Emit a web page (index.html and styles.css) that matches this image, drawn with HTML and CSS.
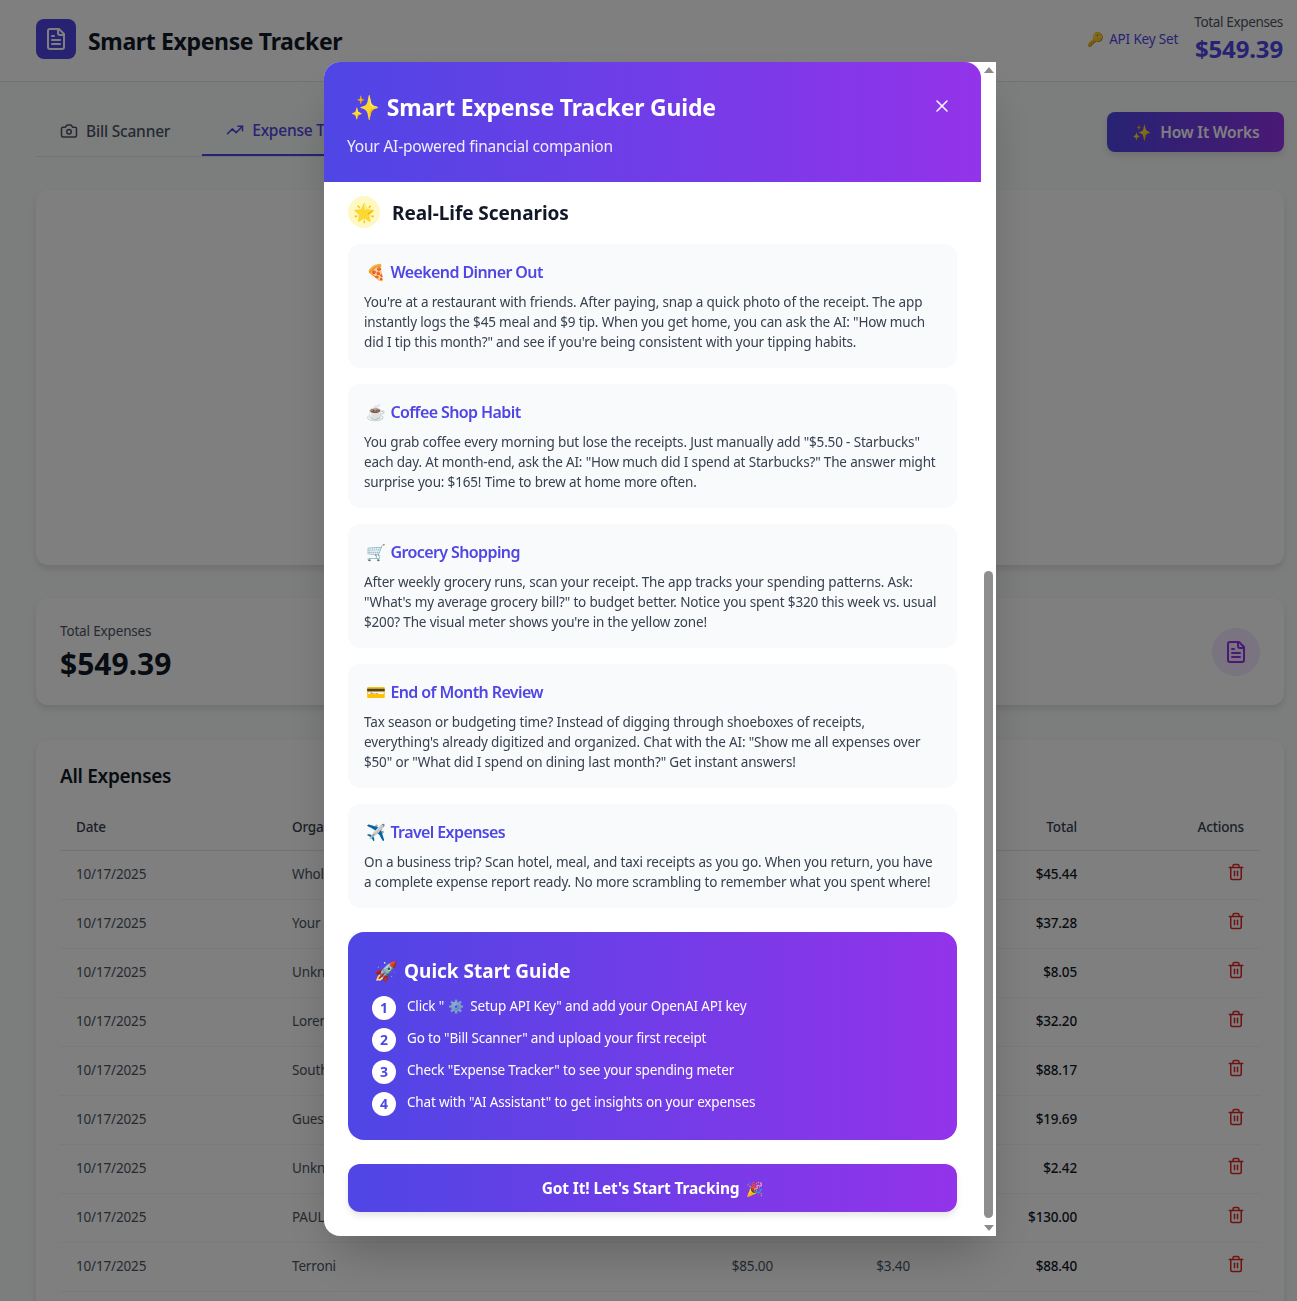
FILE: index.html
```html
<!DOCTYPE html>
<html lang="en">
<head>
    <meta charset="UTF-8">
    <meta name="viewport" content="width=device-width, initial-scale=1.0">
    <title>Smart Expense Tracker</title>
    <link rel="stylesheet" href="styles.css">
</head>
<body>
    <svg class="icon-defs" width="0" height="0" aria-hidden="true">
        <symbol id="i-file" viewBox="0 0 24 24"><path d="M15 2H6a2 2 0 0 0-2 2v16a2 2 0 0 0 2 2h12a2 2 0 0 0 2-2V7Z"/><path d="M14 2v4a2 2 0 0 0 2 2h4"/><path d="M10 9H8"/><path d="M16 13H8"/><path d="M16 17H8"/></symbol>
        <symbol id="i-trash" viewBox="0 0 24 24"><path d="M3 6h18"/><path d="M19 6v14c0 1-1 2-2 2H7c-1 0-2-1-2-2V6"/><path d="M8 6V4c0-1 1-2 2-2h4c1 0 2 1 2 2v2"/><path d="M10 11v6"/><path d="M14 11v6"/></symbol>
    </svg>

    <header class="topbar">
        <div class="brand">
            <span class="brand-mark"><svg class="icon icon-24"><use href="#i-file"/></svg></span>
            <h1>Smart Expense Tracker</h1>
        </div>
        <div class="topbar-right">
            <span class="key-status"><span class="emoji">🔑</span> API Key Set</span>
            <div class="topbar-total">
                <span>Total Expenses</span>
                <strong>$549.39</strong>
            </div>
        </div>
    </header>

    <main class="page">
        <div class="nav-row">
            <nav class="tabs">
                <a class="tab">
                    <svg class="icon icon-18" viewBox="0 0 24 24"><path d="M14.5 4h-5L7 7H4a2 2 0 0 0-2 2v9a2 2 0 0 0 2 2h16a2 2 0 0 0 2-2V9a2 2 0 0 0-2-2h-3l-2.5-3z"/><circle cx="12" cy="13" r="3"/></svg>
                    Bill Scanner
                </a>
                <a class="tab tab-active">
                    <svg class="icon icon-18" viewBox="0 0 24 24"><path d="M22 7 13.5 15.5 8.5 10.5 2 17"/><path d="M16 7h6v6"/></svg>
                    Expense Tracker
                </a>
            </nav>
            <button class="how-btn"><span class="emoji">✨</span> How It Works</button>
        </div>

        <section class="card meter-card"></section>

        <section class="card total-card">
            <div>
                <p class="total-label">Total Expenses</p>
                <p class="total-value">$549.39</p>
            </div>
            <span class="total-icon"><svg class="icon icon-24"><use href="#i-file"/></svg></span>
        </section>

        <section class="card expenses-card">
            <h2>All Expenses</h2>
            <table class="expenses">
                <colgroup>
                    <col class="col-date"><col class="col-org"><col class="col-sub"><col class="col-tax"><col class="col-total"><col class="col-actions">
                </colgroup>
                <thead>
                    <tr><th>Date</th><th>Organization</th><th class="num">Subtotal</th><th class="num">Tax</th><th class="num">Total</th><th class="num">Actions</th></tr>
                </thead>
                <tbody>
                    <tr><td>10/17/2025</td><td>Whole Foods</td><td class="num"></td><td class="num"></td><td class="num total">$45.44</td><td class="num"><svg class="icon icon-18 trash"><use href="#i-trash"/></svg></td></tr>
                    <tr><td>10/17/2025</td><td>Your Store</td><td class="num"></td><td class="num"></td><td class="num total">$37.28</td><td class="num"><svg class="icon icon-18 trash"><use href="#i-trash"/></svg></td></tr>
                    <tr><td>10/17/2025</td><td>Unknown</td><td class="num"></td><td class="num"></td><td class="num total">$8.05</td><td class="num"><svg class="icon icon-18 trash"><use href="#i-trash"/></svg></td></tr>
                    <tr><td>10/17/2025</td><td>Lorem Ipsum</td><td class="num"></td><td class="num"></td><td class="num total">$32.20</td><td class="num"><svg class="icon icon-18 trash"><use href="#i-trash"/></svg></td></tr>
                    <tr><td>10/17/2025</td><td>South Side</td><td class="num"></td><td class="num"></td><td class="num total">$88.17</td><td class="num"><svg class="icon icon-18 trash"><use href="#i-trash"/></svg></td></tr>
                    <tr><td>10/17/2025</td><td>Guest Check</td><td class="num"></td><td class="num"></td><td class="num total">$19.69</td><td class="num"><svg class="icon icon-18 trash"><use href="#i-trash"/></svg></td></tr>
                    <tr><td>10/17/2025</td><td>Unknown</td><td class="num"></td><td class="num"></td><td class="num total">$2.42</td><td class="num"><svg class="icon icon-18 trash"><use href="#i-trash"/></svg></td></tr>
                    <tr><td>10/17/2025</td><td>PAUL</td><td class="num"></td><td class="num"></td><td class="num total">$130.00</td><td class="num"><svg class="icon icon-18 trash"><use href="#i-trash"/></svg></td></tr>
                    <tr><td>10/17/2025</td><td>Terroni</td><td class="num">$85.00</td><td class="num">$3.40</td><td class="num total">$88.40</td><td class="num"><svg class="icon icon-18 trash"><use href="#i-trash"/></svg></td></tr>
                </tbody>
            </table>
        </section>
    </main>

    <div class="overlay">
        <div class="modal">
            <div class="guide">
                <div class="guide-head">
                    <div class="guide-title-row">
                        <h2><span class="emoji">✨</span>Smart Expense Tracker Guide</h2>
                        <svg class="icon guide-close" viewBox="0 0 24 24"><path d="M18 6 6 18"/><path d="m6 6 12 12"/></svg>
                    </div>
                    <p>Your AI-powered financial companion</p>
                </div>
                <div class="guide-body">
                    <div class="section-head">
                        <span class="section-badge emoji">🌟</span>
                        <h3>Real-Life Scenarios</h3>
                    </div>
                    <article class="scenario">
                        <h4><span class="emoji">🍕</span>Weekend Dinner Out</h4>
                        <p>You're at a restaurant with friends. After paying, snap a quick photo of the receipt. The app instantly logs the $45 meal and $9 tip. When you get home, you can ask the AI: "How much did I tip this month?" and see if you're being consistent with your tipping habits.</p>
                    </article>
                    <article class="scenario">
                        <h4><span class="emoji">☕</span>Coffee Shop Habit</h4>
                        <p>You grab coffee every morning but lose the receipts. Just manually add "$5.50 - Starbucks" each day. At month-end, ask the AI: "How much did I spend at Starbucks?" The answer might surprise you: $165! Time to brew at home more often.</p>
                    </article>
                    <article class="scenario">
                        <h4><span class="emoji">🛒</span>Grocery Shopping</h4>
                        <p>After weekly grocery runs, scan your receipt. The app tracks your spending patterns. Ask: "What's my average grocery bill?" to budget better. Notice you spent $320 this week vs. usual $200? The visual meter shows you're in the yellow zone!</p>
                    </article>
                    <article class="scenario">
                        <h4><span class="emoji">💳</span>End of Month Review</h4>
                        <p>Tax season or budgeting time? Instead of digging through shoeboxes of receipts, everything's already digitized and organized. Chat with the AI: "Show me all expenses over $50" or "What did I spend on dining last month?" Get instant answers!</p>
                    </article>
                    <article class="scenario">
                        <h4><span class="emoji">✈️</span>Travel Expenses</h4>
                        <p>On a business trip? Scan hotel, meal, and taxi receipts as you go. When you return, you have a complete expense report ready. No more scrambling to remember what you spent where!</p>
                    </article>

                    <div class="quick-start">
                        <h3><span class="emoji">🚀</span>Quick Start Guide</h3>
                        <ol class="steps">
                            <li><span class="step-num">1</span><span>Click "<span class="emoji gear">⚙️</span> Setup API Key" and add your OpenAI API key</span></li>
                            <li><span class="step-num">2</span><span>Go to "Bill Scanner" and upload your first receipt</span></li>
                            <li><span class="step-num">3</span><span>Check "Expense Tracker" to see your spending meter</span></li>
                            <li><span class="step-num">4</span><span>Chat with "AI Assistant" to get insights on your expenses</span></li>
                        </ol>
                    </div>

                    <button class="got-it">Got It! Let's Start Tracking <span class="emoji">🎉</span></button>
                </div>
            </div>
            <div class="scrollbar">
                <span class="arrow arrow-up"></span>
                <div class="track"><span class="thumb"></span></div>
                <span class="arrow arrow-down"></span>
            </div>
        </div>
    </div>
</body>
</html>
```

FILE: styles.css
```css
* {
    box-sizing: border-box;
}

body {
    margin: 0;
    height: 100vh;
    overflow: hidden;
    background-color: #f9fafb;
    color: #111827;
    font-family: "Noto Sans", sans-serif;
    font-size: 13.5px;
    letter-spacing: -0.16px;
}

h1, h2, h3, h4, p {
    margin: 0;
}

.icon-defs {
    position: absolute;
}

.icon {
    fill: none;
    stroke: currentColor;
    stroke-width: 2;
    stroke-linecap: round;
    stroke-linejoin: round;
    flex-shrink: 0;
}

.icon-24 {
    width: 24px;
    height: 24px;
}

.icon-18 {
    width: 18px;
    height: 18px;
}

/* top bar */
.topbar {
    height: 82px;
    padding: 0 14px 3px 36px;
    display: flex;
    align-items: center;
    justify-content: space-between;
    background: #fff;
    border-bottom: 1px solid #e5e7eb;
}

.brand {
    display: flex;
    align-items: center;
    gap: 12px;
}

.brand-mark {
    width: 40px;
    height: 40px;
    border-radius: 8px;
    background: #4f46e5;
    color: #fff;
    display: flex;
    align-items: center;
    justify-content: center;
}

.brand h1 {
    font-size: 23px;
    font-weight: 700;
    letter-spacing: -0.35px;
    margin-top: 3px;
}

.topbar-right {
    display: flex;
    align-items: center;
    gap: 16px;
}

.key-status {
    color: #4f46e5;
}

.key-status .emoji {
    margin-right: 2px;
}

.topbar-total {
    display: flex;
    flex-direction: column;
    align-items: flex-end;
    color: #4b5563;
    letter-spacing: -0.35px;
}

.topbar-total strong {
    color: #4f46e5;
    font-size: 24px;
    line-height: 32px;
    letter-spacing: -0.15px;
    margin-top: 2px;
}

/* tabs */
.page {
    padding: 30px 13px 0 36px;
}

.nav-row {
    display: flex;
    justify-content: space-between;
    align-items: flex-start;
    height: 78px;
}

.tabs {
    display: flex;
    gap: 8px;
    width: 600px;
    height: 45px;
    border-bottom: 1px solid #e5e7eb;
}

.tab {
    display: flex;
    align-items: center;
    gap: 8px;
    height: 44px;
    padding: 0 24px 7px;
    color: #4b5563;
    font-size: 15.5px;
    font-weight: 500;
    letter-spacing: -0.2px;
}

.tab-active {
    color: #4f46e5;
    border-bottom: 2px solid #4f46e5;
}

.how-btn {
    height: 40px;
    width: 177px;
    border: none;
    border-radius: 8px;
    background: linear-gradient(90deg, #4f46e5, #9333ea);
    box-shadow: 0 4px 6px rgba(0, 0, 0, 0.1);
    color: #fff;
    font-family: inherit;
    font-size: 15.5px;
    font-weight: 600;
    letter-spacing: -0.2px;
}

.how-btn .emoji {
    margin-right: 6px;
}

/* cards */
.card {
    background: #fff;
    border-radius: 12px;
    box-shadow: 0 4px 6px rgba(0, 0, 0, 0.1);
}

.meter-card {
    height: 375px;
    margin-bottom: 33px;
}

.total-card {
    height: 107px;
    padding: 24px;
    margin-bottom: 35px;
    display: flex;
    align-items: center;
    justify-content: space-between;
}

.total-label {
    color: #4b5563;
    line-height: 20px;
}

.total-value {
    font-size: 30px;
    font-weight: 700;
    line-height: 36px;
    letter-spacing: 0;
    margin-top: 5px;
}

.total-icon {
    width: 48px;
    height: 48px;
    border-radius: 50%;
    background: #f3e8ff;
    color: #9333ea;
    display: flex;
    align-items: center;
    justify-content: center;
}

.expenses-card {
    padding: 22px 24px 24px;
}

.expenses-card h2 {
    font-size: 19px;
    font-weight: 600;
    line-height: 28px;
    letter-spacing: -0.3px;
    margin-bottom: 14px;
}

.expenses {
    width: 100%;
    border-collapse: collapse;
    table-layout: fixed;
}

.col-date { width: 216px; }
.col-org { width: 313px; }
.col-sub { width: 200px; }
.col-tax { width: 137px; }
.col-total { width: 167px; }
.col-actions { width: 167px; }

.expenses th {
    height: 46px;
    padding: 0 16px;
    text-align: left;
    color: #374151;
    font-weight: 500;
    border-bottom: 1px solid #e5e7eb;
}

.expenses td {
    height: 49px;
    padding: 13px 16px 0;
    vertical-align: top;
    line-height: 20px;
    color: #4b5563;
    border-bottom: 1px solid #f3f4f6;
}

.expenses .num {
    text-align: right;
}

.expenses .total {
    color: #111827;
    font-weight: 500;
}

.trash {
    display: block;
    margin: -1px -1px 0 auto;
    color: #dc2626;
}

/* modal */
.overlay {
    position: fixed;
    top: 0;
    right: 0;
    bottom: 0;
    left: 0;
    padding: 62px 301px 65px 324px;
    background: rgba(0, 0, 0, 0.5);
}

.modal {
    height: 100%;
    display: flex;
    background: #fff;
    border-radius: 16px 0 0 16px;
    box-shadow: 0 25px 50px -12px rgba(0, 0, 0, 0.25);
}

.guide {
    flex: 1;
    min-width: 0;
}

.guide-head {
    height: 120px;
    padding: 22px 24px 0;
    color: #fff;
    border-radius: 16px 16px 0 0;
    background: linear-gradient(90deg, #4f46e5, #9333ea);
}

.guide-title-row {
    display: flex;
    align-items: center;
    justify-content: space-between;
    height: 44px;
}

.guide-title-row h2 {
    font-size: 23px;
    font-weight: 700;
    letter-spacing: -0.2px;
}

.guide-title-row .emoji {
    font-size: 24px;
    margin: 0 7px 0 2px;
}

.guide-close {
    width: 20px;
    height: 20px;
    margin-right: 5px;
    stroke-width: 1.8;
}

.guide-head p {
    font-size: 15.5px;
    line-height: 24px;
    letter-spacing: -0.2px;
    opacity: 0.9;
    margin: 6px 0 0 -1px;
}

.guide-body {
    padding: 14px 24px 24px;
}

.section-head {
    display: flex;
    align-items: center;
    gap: 12px;
    margin-bottom: 16px;
}

.section-badge {
    width: 32px;
    height: 32px;
    border-radius: 50%;
    background: #fef9c3;
    display: flex;
    align-items: center;
    justify-content: center;
    font-size: 18px;
}

.section-head h3 {
    font-size: 19px;
    font-weight: 700;
    letter-spacing: -0.05px;
    margin-top: 2px;
    color: #111827;
}

.scenario {
    background: #f9fafb;
    border-radius: 12px;
    padding: 16px;
    margin-bottom: 16px;
}

.scenario h4 {
    color: #4f46e5;
    font-size: 16px;
    font-weight: 600;
    line-height: 24px;
    letter-spacing: -0.6px;
    margin-bottom: 8px;
}

.scenario h4 .emoji {
    margin: 0 5px 0 2px;
}

.scenario p {
    color: #374151;
    line-height: 20px;
}

.quick-start {
    margin-top: 24px;
    padding: 24px;
    height: 208px;
    border-radius: 16px;
    color: #fff;
    background: linear-gradient(90deg, #4f46e5, #9333ea);
}

.quick-start h3 {
    font-size: 19px;
    font-weight: 700;
    line-height: 30px;
    letter-spacing: 0;
    margin-bottom: 10px;
}

.quick-start h3 .emoji {
    margin: 0 6px 0 2px;
}

.steps {
    list-style: none;
    margin: 0;
    padding: 0;
    display: flex;
    flex-direction: column;
    gap: 8px;
}

.steps li {
    display: flex;
    align-items: flex-start;
    gap: 11px;
    line-height: 20px;
    height: 24px;
}

.gear {
    font-size: 13px;
    margin: 0 3px 0 4px;
    opacity: 0.85;
}

.step-num {
    width: 24px;
    height: 24px;
    border-radius: 50%;
    background: #fff;
    color: #4f46e5;
    display: flex;
    align-items: center;
    justify-content: center;
    font-weight: 700;
    font-size: 14px;
}

.got-it {
    width: 100%;
    height: 48px;
    margin-top: 24px;
    border: none;
    border-radius: 12px;
    color: #fff;
    background: linear-gradient(90deg, #4f46e5, #9333ea);
    box-shadow: 0 4px 6px rgba(0, 0, 0, 0.1);
    font-family: inherit;
    font-size: 15.5px;
    font-weight: 700;
    letter-spacing: -0.14px;
}

.got-it .emoji {
    margin-left: 3px;
    font-size: 14px;
}

/* scrollbar, drawn because the content is a fixed scroll position */
.scrollbar {
    width: 15px;
    display: flex;
    flex-direction: column;
    align-items: center;
}

.arrow {
    width: 0;
    height: 0;
    margin: 5px 0;
    border-left: 5px solid transparent;
    border-right: 5px solid transparent;
}

.arrow-up {
    border-bottom: 6px solid #8b8b8b;
}

.arrow-down {
    border-top: 6px solid #8b8b8b;
}

.track {
    flex: 1;
    width: 9px;
    display: flex;
    flex-direction: column;
    justify-content: flex-end;
    padding-bottom: 2px;
}

.thumb {
    height: 647px;
    border-radius: 5px;
    background: #8e8e8e;
}
```
